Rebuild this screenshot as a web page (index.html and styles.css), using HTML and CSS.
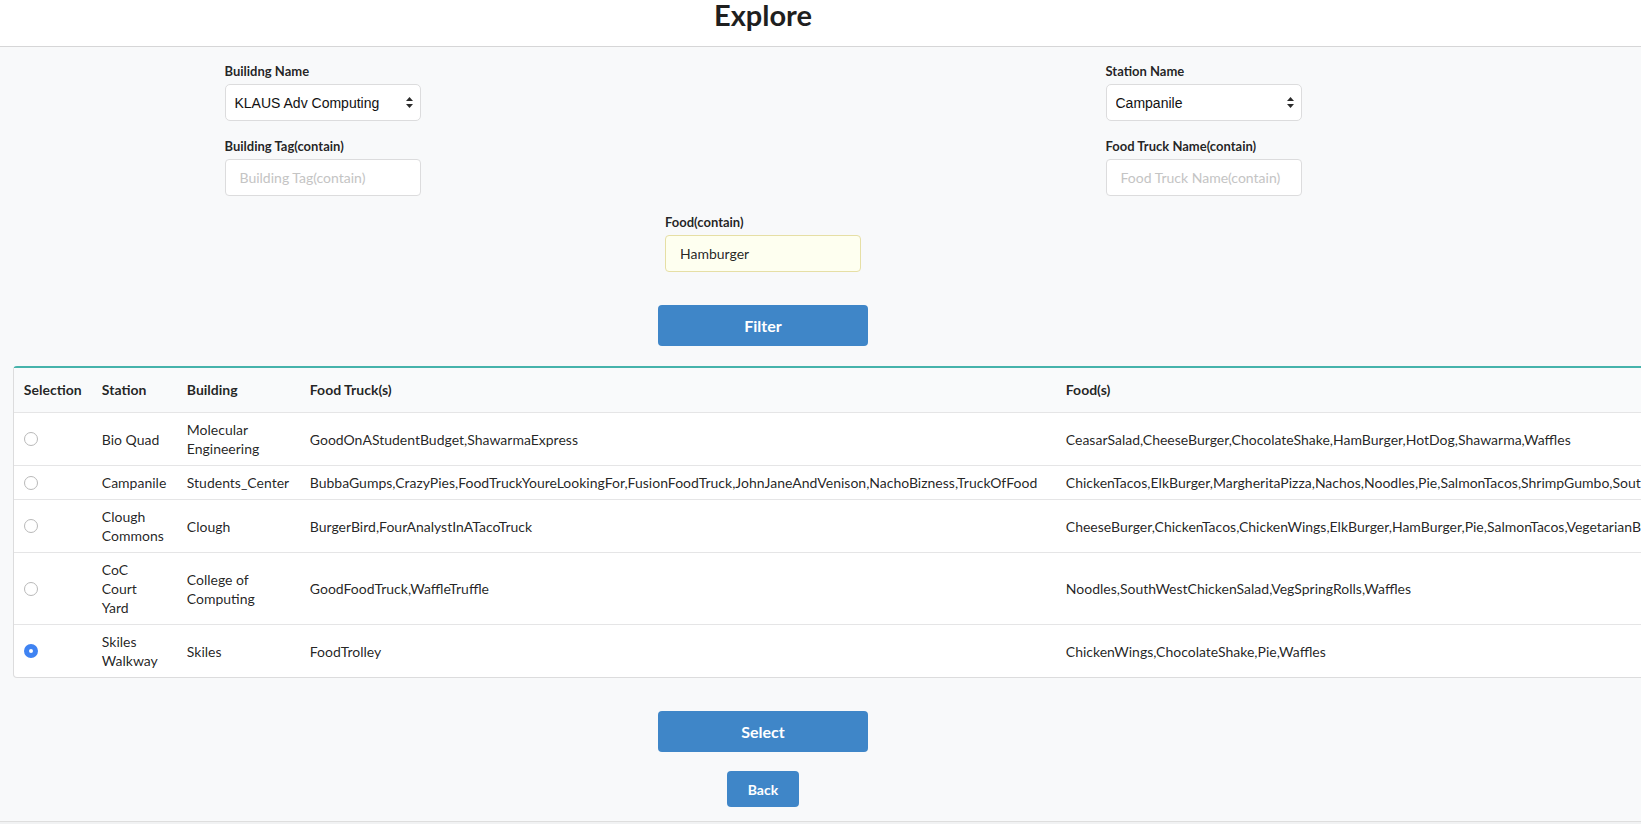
FILE: index.html
```html
<!DOCTYPE html>
<html lang="en">
<head>
<meta charset="utf-8">
<title>Explore</title>
<link rel="stylesheet" href="styles.css">
</head>
<body>
<header class="topbar">
  <div class="wrap">
    <h1 class="title">Explore</h1>
  </div>
</header>
<main class="wrap main">
  <form class="filters">
    <div class="columns">
      <div class="col">
        <div class="field">
          <label class="label">Builidng Name</label>
          <div class="select-box">
            <select class="select">
              <option>KLAUS Adv Computing</option>
            </select>
            <svg class="arrows" width="7" height="11" viewBox="0 0 7 11"><path d="M3.5 0 L7 4 L0 4 Z M0 7 L7 7 L3.5 11 Z" fill="#2b2b2b"/></svg>
          </div>
        </div>
        <div class="field">
          <label class="label">Building Tag(contain)</label>
          <input class="input" type="text" placeholder="Building Tag(contain)">
        </div>
      </div>
      <div class="col">
        <div class="field">
          <label class="label">Station Name</label>
          <div class="select-box">
            <select class="select">
              <option>Campanile</option>
            </select>
            <svg class="arrows" width="7" height="11" viewBox="0 0 7 11"><path d="M3.5 0 L7 4 L0 4 Z M0 7 L7 7 L3.5 11 Z" fill="#2b2b2b"/></svg>
          </div>
        </div>
        <div class="field">
          <label class="label">Food Truck Name(contain)</label>
          <input class="input" type="text" placeholder="Food Truck Name(contain)">
        </div>
      </div>
    </div>
    <div class="field center-field">
      <label class="label">Food(contain)</label>
      <input class="input filled" type="text" value="Hamburger">
    </div>
    <button type="button" class="btn btn-large">Filter</button>
  </form>

  <div class="table-holder">
    <table class="results">
      <colgroup>
        <col class="c-sel">
        <col class="c-station">
        <col class="c-building">
        <col class="c-trucks">
        <col class="c-foods">
      </colgroup>
      <thead>
        <tr>
          <th>Selection</th>
          <th>Station</th>
          <th>Building</th>
          <th>Food Truck(s)</th>
          <th>Food(s)</th>
        </tr>
      </thead>
      <tbody>
        <tr>
          <td><input type="radio" name="sel" class="radio"></td>
          <td class="station">Bio Quad</td>
          <td>Molecular Engineering</td>
          <td>GoodOnAStudentBudget,ShawarmaExpress</td>
          <td>CeasarSalad,CheeseBurger,ChocolateShake,HamBurger,HotDog,Shawarma,Waffles</td>
        </tr>
        <tr>
          <td><input type="radio" name="sel" class="radio"></td>
          <td class="station">Campanile</td>
          <td>Students_Center</td>
          <td>BubbaGumps,CrazyPies,FoodTruckYoureLookingFor,FusionFoodTruck,JohnJaneAndVenison,NachoBizness,TruckOfFood</td>
          <td>ChickenTacos,ElkBurger,MargheritaPizza,Nachos,Noodles,Pie,SalmonTacos,ShrimpGumbo,SouthWestChickenSalad,VegSpringRolls,Waffles</td>
        </tr>
        <tr>
          <td><input type="radio" name="sel" class="radio"></td>
          <td class="station">Clough Commons</td>
          <td>Clough</td>
          <td>BurgerBird,FourAnalystInATacoTruck</td>
          <td>CheeseBurger,ChickenTacos,ChickenWings,ElkBurger,HamBurger,Pie,SalmonTacos,VegetarianBurrito</td>
        </tr>
        <tr>
          <td><input type="radio" name="sel" class="radio"></td>
          <td class="station">CoC Court Yard</td>
          <td>College of Computing</td>
          <td>GoodFoodTruck,WaffleTruffle</td>
          <td>Noodles,SouthWestChickenSalad,VegSpringRolls,Waffles</td>
        </tr>
        <tr>
          <td><input type="radio" name="sel" class="radio" checked></td>
          <td class="station">Skiles Walkway</td>
          <td>Skiles</td>
          <td>FoodTrolley</td>
          <td>ChickenWings,ChocolateShake,Pie,Waffles</td>
        </tr>
      </tbody>
    </table>
  </div>

  <div class="actions">
    <button type="button" class="btn btn-large">Select</button>
    <button type="button" class="btn btn-small">Back</button>
  </div>
</main>
<footer class="footer"></footer>
</body>
</html>
```

FILE: styles.css
```css
html {
  overflow: hidden;
}

body {
  margin: 0;
  background: #f8f9fa;
  font-family: Lato, "Open Sans", sans-serif;
  font-size: 14px;
  color: rgba(0, 0, 0, 0.87);
}

.wrap {
  width: 1526px;
}

.topbar {
  height: 46px;
  background: #ffffff;
  border-bottom: 1px solid #d6d6d7;
}

.title {
  margin: 0;
  text-align: center;
  font-size: 29px;
  line-height: 29px;
  font-weight: 700;
  color: #1f1f1f;
}

.main {
  padding-top: 15px;
}

.filters {
  display: flex;
  flex-direction: column;
  align-items: center;
}

.columns {
  width: 1077px;
  display: flex;
  justify-content: space-between;
}

.col {
  width: 196px;
  display: flex;
  flex-direction: column;
  gap: 16px;
}

.field {
  display: flex;
  flex-direction: column;
}

.label {
  font-size: 13px;
  font-weight: 700;
  line-height: 18px;
  margin-bottom: 4px;
  color: rgba(0, 0, 0, 0.87);
}

.select-box {
  position: relative;
  height: 37px;
}

.select {
  appearance: none;
  -webkit-appearance: none;
  width: 100%;
  height: 37px;
  box-sizing: border-box;
  margin: 0;
  padding: 0 24px 0 9px;
  font-family: "Liberation Sans", Arial, sans-serif;
  font-size: 14px;
  color: #111;
  background: #ffffff;
  border: 1px solid #dcdcdd;
  border-radius: 5px;
}

.arrows {
  position: absolute;
  right: 8px;
  top: 13px;
  pointer-events: none;
}

.input {
  width: 100%;
  height: 37px;
  box-sizing: border-box;
  margin: 0;
  padding: 0 14px;
  font-family: Lato, sans-serif;
  font-size: 14px;
  color: rgba(0, 0, 0, 0.87);
  background: #ffffff;
  border: 1px solid #dcdcdd;
  border-radius: 4px;
  outline: none;
}

.input::placeholder {
  color: #c4c4c4;
}

.input.filled {
  background: #fefff0;
  border-color: #e6dfa5;
}

.center-field {
  width: 196px;
  margin-top: 17px;
}

.btn {
  font-family: Lato, sans-serif;
  font-weight: 700;
  color: #ffffff;
  background: #3f86c8;
  border: none;
  border-radius: 4px;
  margin: 0;
  padding: 0;
  cursor: pointer;
}

.btn-large {
  width: 210px;
  height: 41px;
  font-size: 16px;
}

.btn-small {
  width: 72px;
  height: 36px;
  font-size: 14px;
}

.filters .btn-large {
  margin-top: 33px;
}

.table-holder {
  margin-top: 20px;
  margin-left: 13px;
}

.results {
  table-layout: fixed;
  width: 1944px;
  border-collapse: separate;
  border-spacing: 0;
  background: #ffffff;
  border: 1px solid #dcdcdd;
  border-top: 2px solid #46b3ab;
  border-radius: 4px;
  font-size: 14px;
  line-height: 19px;
  color: rgba(0, 0, 0, 0.87);
}

.c-sel {
  width: 78px;
}

.c-station {
  width: 85px;
}

.c-building {
  width: 123px;
}

.c-trucks {
  width: 756px;
}

.c-foods {
  width: 900px;
}

.results th {
  background: #f9fafb;
  text-align: left;
  font-weight: 700;
  padding: 12px 9.8px 13px;
  border-bottom: 1px solid #e5e5e6;
}

.results td {
  padding: 7px 9.8px;
  border-top: 1px solid #e5e5e6;
  vertical-align: middle;
}

.results td.station {
  padding-right: 14px;
}

.results tbody tr:first-child td {
  border-top: none;
}

.radio {
  appearance: none;
  -webkit-appearance: none;
  display: block;
  width: 14px;
  height: 14px;
  margin: 0;
  border: 1px solid #b9b9b9;
  border-radius: 50%;
  background: #ffffff;
  box-sizing: border-box;
}

.radio:checked {
  border: 5px solid #3f83f2;
  background: #ffffff;
}

.actions {
  display: flex;
  flex-direction: column;
  align-items: center;
  gap: 19px;
  margin-top: 33px;
}

.footer {
  margin-top: 14px;
  height: 10px;
  border-top: 1px solid #dedede;
  background: #f1f2f3;
}
```
